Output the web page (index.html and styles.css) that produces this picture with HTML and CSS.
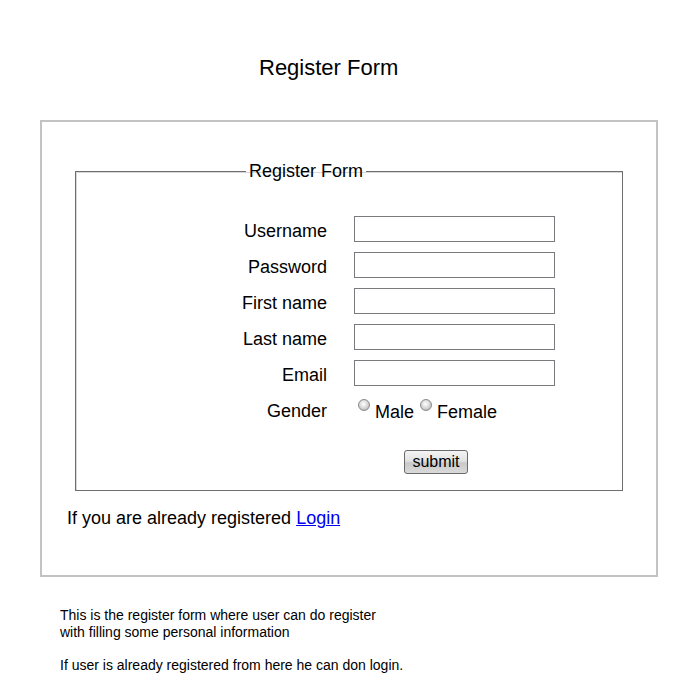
FILE: index.html
```html
<!DOCTYPE html>
<html>
<head>
<meta charset="utf-8">
<title>Register Form</title>
<link rel="stylesheet" href="styles.css">
</head>
<body>
<h1 class="title">Register Form</h1>
<div class="box">
  <fieldset class="set">
    <legend class="legend">Register Form</legend>
    <form class="grid">
      <label class="lbl">Username</label><input class="field" type="text">
      <label class="lbl">Password</label><input class="field" type="password">
      <label class="lbl">First name</label><input class="field" type="text">
      <label class="lbl">Last name</label><input class="field" type="text">
      <label class="lbl">Email</label><input class="field" type="text">
      <label class="lbl">Gender</label>
      <div class="radios">
        <input class="radio" type="radio" name="g"><span>Male</span>
        <input class="radio" type="radio" name="g"><span>Female</span>
      </div>
      <div></div>
      <div class="btnrow"><button class="btn" type="button">submit</button></div>
    </form>
  </fieldset>
  <p class="already">If you are already registered <a href="#" class="link">Login</a></p>
</div>
<div class="notes">
  <p class="note">This is the register form where user can do register<br>with filling some personal information</p>
  <p class="note">If user is already registered from here he can don login.</p>
</div>
</body>
</html>
```

FILE: styles.css
```css
body {
  margin: 0;
  font-family: "Liberation Sans", Arial, sans-serif;
  color: #000;
  background: #fff;
}

.title {
  margin: 0;
  padding: 55px 0 0 259px;
  font-size: 22px;
  line-height: 26px;
  font-weight: normal;
}

.box {
  box-sizing: border-box;
  margin: 39px 0 0 40px;
  width: 618px;
  height: 457px;
  border: 2px solid #c3c3c3;
  padding-top: 39px;
}

.set {
  box-sizing: border-box;
  margin: 0 0 0 33px;
  width: 548px;
  height: 330px;
  padding: 0;
  border: 1px solid #6e6e6e;
  box-shadow: inset 1px 1px 0 #d8d8d8;
}

.legend {
  margin-left: 170px;
  padding: 0 3px;
  font-size: 18px;
  line-height: 21px;
}

.grid {
  display: grid;
  grid-template-columns: 170px 201px;
  column-gap: 27px;
  row-gap: 10px;
  grid-auto-rows: 26px;
  margin: 34px 0 0 81px;
}

.lbl {
  font-size: 18px;
  text-align: right;
  align-self: start;
  padding-top: 5px;
  line-height: 21px;
}

.field {
  box-sizing: border-box;
  width: 201px;
  height: 26px;
  margin: 0;
  border: 1px solid #7a7a7e;
  background: #fff;
}

.radios {
  display: flex;
  align-items: flex-start;
  font-size: 18px;
  line-height: 21px;
  padding-top: 6px;
}

.radio {
  appearance: none;
  -webkit-appearance: none;
  width: 12px;
  height: 12px;
  margin: -3px 5px 0 4px;
  border-radius: 50%;
  border: 1px solid #8a8a8a;
  background: radial-gradient(circle at 45% 40%, #ffffff 0, #e4e4e4 35%, #a8a8a8 100%);
  box-sizing: border-box;
}

.radios span + .radio {
  margin-left: 6px;
}

.btnrow {
  margin-top: 18px;
  padding-left: 50px;
}

.btn {
  box-sizing: border-box;
  width: 64px;
  height: 24px;
  padding: 0;
  font-family: "Liberation Sans", Arial, sans-serif;
  font-size: 16px;
  line-height: 20px;
  color: #000;
  border: 1px solid #6a6a6a;
  border-radius: 3px;
  background: linear-gradient(#f4f4f4 0%, #e2e2e2 45%, #c9c9c9 55%, #dadada 100%);
}

.already {
  margin: 17px 0 0 25px;
  font-size: 18px;
  line-height: 21px;
}

.link {
  color: #0000ee;
}

.notes {
  padding: 30px 0 0 60px;
}

.note {
  margin: 0 0 16px;
  font-size: 14px;
  line-height: 17px;
}
```
